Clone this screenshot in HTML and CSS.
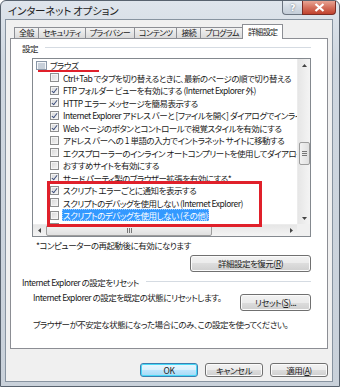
FILE: index.html
```html
<!DOCTYPE html>
<html lang="ja">
<head>
  <meta charset="UTF-8">
  <title>インターネット オプション</title>
  <link rel="stylesheet" href="styles.css">
</head>
<body>
  <div class="window">
    <!-- タイトルバー -->
    <div class="titlebar">
      <span class="title">インターネット オプション</span>
      <div class="caption-buttons">
        <span class="cap-btn help">?</span>
        <span class="cap-btn close">
          <svg width="11" height="9" viewBox="0 0 11 9"><path d="M1.5 1 L9.5 8 M9.5 1 L1.5 8" stroke="#fff" stroke-width="2.2"/></svg>
        </span>
      </div>
    </div>

    <div class="client">
      <!-- タブ -->
      <div class="tabs">
        <span class="tab">全般</span>
        <span class="tab">セキュリティ</span>
        <span class="tab">プライバシー</span>
        <span class="tab">コンテンツ</span>
        <span class="tab">接続</span>
        <span class="tab">プログラム</span>
        <span class="tab active">詳細設定</span>
      </div>

      <div class="panel">
        <div class="group-label"><span>設定</span></div>

        <div class="listbox">
          <div class="items">
            <div class="row folder">
              <svg class="folder-icon" width="11" height="9" viewBox="0 0 11 9">
                <rect x="0.5" y="0.5" width="10" height="8" fill="#f4f6f9" stroke="#8a97a8"/>
                <path d="M2 3 H9 M2 5 H9 M2 7 H9" stroke="#9aa8ba"/>
              </svg>
              <span>ブラウズ</span>
            </div>
            <div class="row"><span class="cb"></span><span>Ctrl+Tab でタブを切り替えるときに、最新のページの順で切り替える</span></div>
            <div class="row"><span class="cb on"></span><span>FTP フォルダー ビューを有効にする (Internet Explorer 外)</span></div>
            <div class="row"><span class="cb on"></span><span>HTTP エラー メッセージを簡易表示する</span></div>
            <div class="row"><span class="cb on"></span><span>Internet Explorer アドレス バーと [ファイルを開く] ダイアログでインライン オートコンプリートを使用する</span></div>
            <div class="row"><span class="cb on"></span><span>Web ページのボタンとコントロールで視覚スタイルを有効にする</span></div>
            <div class="row"><span class="cb"></span><span>アドレス バーへの 1 単語の入力でイントラネット サイトに移動する</span></div>
            <div class="row"><span class="cb"></span><span>エクスプローラーのインライン オートコンプリートを使用してダイアログを実行する</span></div>
            <div class="row"><span class="cb"></span><span>おすすめサイトを有効にする</span></div>
            <div class="row"><span class="cb on"></span><span>サード パーティ製のブラウザー拡張を有効にする*</span></div>
            <div class="row"><span class="cb on"></span><span>スクリプト エラーごとに通知を表示する</span></div>
            <div class="row"><span class="cb"></span><span>スクリプトのデバッグを使用しない (Internet Explorer)</span></div>
            <div class="row"><span class="cb"></span><span class="selected">スクリプトのデバッグを使用しない (その他)</span></div>
            <div class="row"><span class="cb"></span><span>ページ切り替えを有効にする</span></div>
          </div>

          <div class="vscroll">
            <span class="arrow"><svg width="5" height="3" viewBox="0 0 5 3"><path d="M0 3 L2.5 0 L5 3Z" fill="#444"/></svg></span>
            <span class="vthumb"><svg width="5" height="5" viewBox="0 0 5 5"><path d="M0 0.5 H5 M0 2.5 H5 M0 4.5 H5" stroke="#777"/></svg></span>
            <span class="arrow bottom"><svg width="5" height="3" viewBox="0 0 5 3"><path d="M0 0 L2.5 3 L5 0Z" fill="#444"/></svg></span>
          </div>

          <div class="hscroll">
            <span class="arrow"><svg width="3" height="5" viewBox="0 0 3 5"><path d="M3 0 L0 2.5 L3 5Z" fill="#444"/></svg></span>
            <span class="hthumb"><svg width="5" height="5" viewBox="0 0 5 5"><path d="M0.5 0 V5 M2.5 0 V5 M4.5 0 V5" stroke="#777"/></svg></span>
            <span class="arrow right"><svg width="3" height="5" viewBox="0 0 3 5"><path d="M0 0 L3 2.5 L0 5Z" fill="#444"/></svg></span>
          </div>
          <div class="corner"></div>
        </div>

        <p class="note">*コンピューターの再起動後に有効になります</p>

        <div class="button-row">
          <span class="btn restore">詳細設定を復元(<u>R</u>)</span>
        </div>

        <div class="group-label reset-label"><span>Internet Explorer の設定をリセット</span></div>

        <div class="reset-row">
          <span class="reset-text">Internet Explorer の設定を既定の状態にリセットします。</span>
          <span class="btn reset">リセット(<u>S</u>)...</span>
        </div>
        <p class="warning">ブラウザーが不安定な状態になった場合にのみ、この設定を使ってください。</p>
      </div>

      <div class="footer">
        <span class="btn default">OK</span>
        <span class="btn">キャンセル</span>
        <span class="btn">適用(<u>A</u>)</span>
      </div>
    </div>

    <!-- 赤い注釈 -->
    <div class="mark-underline"></div>
    <div class="mark-box"></div>
  </div>
</body>
</html>
```

FILE: styles.css
```css
body {
  margin: 0;
  background: #fff;
  font-family: "Noto Sans CJK JP", "Noto Sans", sans-serif;
  font-size: 8.5px;
  letter-spacing: -0.5px;
  color: #1a1a1a;
  font-feature-settings: "palt";
}
.window {
  position: relative;
  width: 340px;
  height: 387px;
  box-sizing: border-box;
  border: 1px solid #58626e;
  border-radius: 6px 6px 0 0;
  background: linear-gradient(#dfe5ec, #cfd7e0 60px, #c9d1da);
  padding: 0 6px 5px 4px;
  display: flex;
  flex-direction: column;
}
/* タイトルバー */
.titlebar {
  height: 18px;
  flex: none;
  display: flex;
  justify-content: space-between;
  align-items: flex-start;
  margin-right: -3px;
}
.title {
  margin: 2px 0 0 3px;
  font-size: 10.5px;
  letter-spacing: -0.2px;
  color: #222;
}
.caption-buttons {
  display: flex;
}
.cap-btn {
  height: 13px;
  border: 1px solid #6b7480;
  border-top: none;
  display: flex;
  align-items: center;
  justify-content: center;
}
.help {
  width: 19px;
  border-radius: 0 0 0 4px;
  border-right: none;
  background: linear-gradient(#e6ebf1, #d2dae3 50%, #c4cdd8);
  color: #fff;
  font-family: "DejaVu Sans", sans-serif;
  font-weight: bold;
  font-size: 9px;
  text-shadow: 0 0 2px #56606c;
}
.close {
  width: 32px;
  border-radius: 0 0 4px 0;
  border-color: #7a2c25;
  background: linear-gradient(#e8a493, #d46f5c 50%, #c0422e);
}
/* クライアント領域 */
.client {
  flex: 1;
  background: #f0f0f0;
  border: 1px solid #8793a0;
  padding: 4px;
  display: flex;
  flex-direction: column;
}
.tabs {
  display: flex;
  align-items: flex-end;
  padding-left: 4px;
  height: 14px;
  flex: none;
  position: relative;
  z-index: 1;
}
.tab {
  height: 10px;
  line-height: 10px;
  padding: 0 4px;
  font-size: 8px;
  letter-spacing: -0.6px;
  border: 1px solid #8c8e94;
  border-bottom: none;
  margin-right: -1px;
  background: linear-gradient(#f3f3f3, #e6e6e6 50%, #dadada);
  white-space: nowrap;
}
.tab.active {
  height: 14px;
  line-height: 13px;
  margin: 0 0 -1px -1px;
  padding: 0 5px;
  background: #fff;
  z-index: 1;
}
.panel {
  height: 311px;
  flex: none;
  box-sizing: border-box;
  background: #fff;
  border: 1px solid #8c8e94;
  padding: 3px 16px 0 11px;
  display: flex;
  flex-direction: column;
}
.group-label {
  display: flex;
  align-items: center;
  height: 11px;
  flex: none;
  color: #222;
}
.group-label::after {
  content: "";
  flex: 1;
  height: 1px;
  background: #d5dbe2;
  margin-left: 7px;
}
/* リストボックス */
.listbox {
  margin: 5px 0 0 10px;
  height: 179px;
  flex: none;
  box-sizing: border-box;
  border: 1px solid #84898f;
  display: grid;
  grid-template-columns: 1fr 13px;
  grid-template-rows: 1fr 12px;
  overflow: hidden;
}
.items {
  overflow: hidden;
}
.row {
  height: 12.5px;
  display: flex;
  align-items: center;
  padding-left: 17px;
  white-space: nowrap;
}
.row.folder {
  padding-left: 3px;
}
.folder-icon {
  margin-right: 3px;
  flex: none;
}
.cb {
  flex: none;
  width: 7px;
  height: 7px;
  border: 1px solid #8e8f8f;
  box-shadow: inset 0 0 0 1px #f4f4f4;
  background: linear-gradient(135deg, #d6d6d6, #f6f6f6);
  margin-right: 4px;
  display: flex;
  justify-content: center;
}
.cb.on::after {
  content: "";
  width: 2px;
  height: 5px;
  border: solid #3d4f7d;
  border-width: 0 1.5px 1.5px 0;
  transform: rotate(38deg);
}
.selected {
  background: #3399ff;
  color: #fff;
  outline: 1px dotted #9ccaff;
  outline-offset: -1px;
  padding: 0 1px;
  margin-left: -1px;
  line-height: 12px;
}
/* スクロールバー */
.vscroll {
  grid-row: 1;
  grid-column: 2;
  background: linear-gradient(90deg, #e6e6e6, #f4f4f4);
  border-left: 1px solid #ececec;
  display: flex;
  flex-direction: column;
  align-items: center;
}
.arrow {
  height: 12px;
  width: 12px;
  display: flex;
  align-items: center;
  justify-content: center;
  flex: none;
}
.arrow.bottom {
  margin-top: auto;
}
.vthumb {
  margin-top: 71px;
  width: 9px;
  height: 21px;
  border: 1px solid #9d9d9d;
  border-radius: 2px;
  background: linear-gradient(90deg, #f2f2f2, #e0e0e0);
  display: flex;
  align-items: center;
  justify-content: center;
}
.hscroll {
  grid-row: 2;
  grid-column: 1;
  background: linear-gradient(#e6e6e6, #f4f4f4);
  border-top: 1px solid #ececec;
  display: flex;
  align-items: center;
}
.arrow.right {
  margin-left: auto;
}
.hthumb {
  margin-left: 1px;
  width: 164px;
  height: 9px;
  border: 1px solid #9d9d9d;
  border-radius: 2px;
  background: linear-gradient(#f2f2f2, #e0e0e0);
  display: flex;
  align-items: center;
  justify-content: center;
}
.corner {
  grid-row: 2;
  grid-column: 2;
  background: #f0f0f0;
}
.note {
  margin: 2px 0 0 14px;
  height: 12px;
  line-height: 12px;
}
.button-row {
  display: flex;
  justify-content: flex-end;
  margin-top: 4px;
}
/* ボタン */
.btn {
  height: 15px;
  line-height: 15px;
  border: 1px solid #707070;
  border-radius: 3px;
  box-shadow: inset 0 0 0 1px #fbfbfb;
  background: linear-gradient(#f2f2f2, #ebebeb 50%, #dddddd 50%, #cfcfcf);
  text-align: center;
  color: #222;
  white-space: nowrap;
}
.btn u {
  text-decoration-thickness: 1px;
  text-underline-offset: 1px;
}
.restore {
  width: 119px;
}
.reset-label {
  margin-top: 4px;
}
.reset-row {
  display: flex;
  justify-content: space-between;
  align-items: flex-start;
  margin: 4px 0 0 11px;
}
.reset-text {
  line-height: 12px;
}
.reset {
  width: 69px;
  margin-top: 3px;
}
.warning {
  margin: 7px 0 0 11px;
  line-height: 12px;
}
.footer {
  display: flex;
  justify-content: flex-end;
  gap: 7px;
  margin-top: 14px;
}
.footer .btn {
  width: 56px;
  height: 12px;
  line-height: 12px;
}
.footer .btn.default {
  border-color: #3c7fb1;
  box-shadow: inset 0 0 0 1px #48d9f7;
  background: linear-gradient(#eaf6fd, #d9f0fc 50%, #bee6fd 50%, #a7d9f5);
}
/* 赤い注釈 */
.mark-underline {
  position: absolute;
  left: 37px;
  top: 69px;
  width: 61px;
  height: 2px;
  background: #e0202a;
}
.mark-box {
  position: absolute;
  left: 46px;
  top: 180px;
  width: 209px;
  height: 40px;
  border: 3px solid #e0202a;
}
```
